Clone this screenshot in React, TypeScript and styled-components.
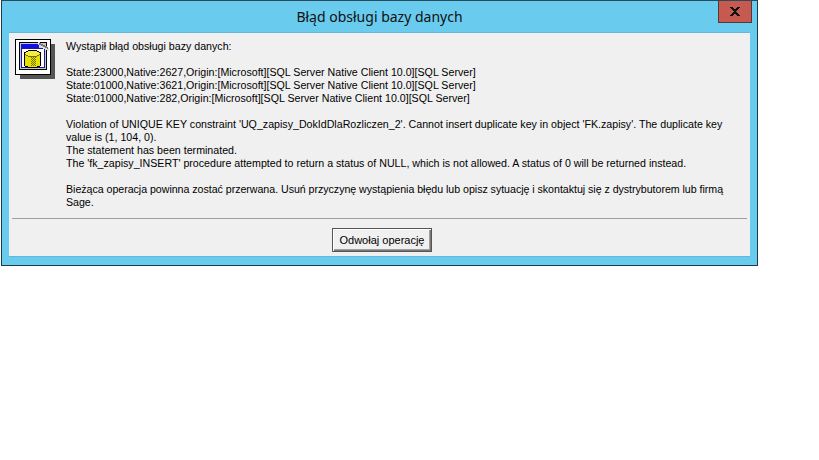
import React from "react";
import styled, { createGlobalStyle } from "styled-components";

const Global = createGlobalStyle`
  html, body { margin: 0; padding: 0; background: #fff; }
`;

const Window = styled.div`
  box-sizing: border-box;
  position: relative;
  width: 757px;
  height: 266px;
  margin-left: 1px;
  background: #69cbee;
  border: 1px solid #1f3a4a;
  border-top-color: #2a4a5c;
  display: flex;
  flex-direction: column;
`;

const TitleBar = styled.div`
  height: 31px;
  flex: none;
  display: flex;
  align-items: center;
  justify-content: center;
  font: 14px "Noto Sans", "Open Sans", sans-serif;
  color: #111;
`;

const CloseButton = styled.div`
  position: absolute;
  top: 0;
  right: 5px;
  box-sizing: border-box;
  width: 34px;
  height: 22px;
  background: #c75a50;
  border: 1px solid #4f3a3c;
  border-top: none;
  display: flex;
  align-items: center;
  justify-content: center;
`;

const Client = styled.div`
  box-sizing: border-box;
  margin: 0 7px;
  height: 225px;
  background: #f0f0f0;
  border: solid #62b8d8;
  border-width: 1px 0;
  display: flex;
  flex-direction: column;
`;

const Content = styled.div`
  display: flex;
  height: 185px;
  flex: none;
  box-sizing: border-box;
`;

const IconSlot = styled.div`
  width: 57px;
  flex: none;
  padding: 6px 0 0 6px;
  box-sizing: border-box;
`;

const Text = styled.div`
  flex: 1;
  padding-top: 7px;
  padding-right: 16px;
  font: 10.65px/13px "Liberation Sans", Arial, sans-serif;
  color: #000;
`;

const Para = styled.p<{ $tracking?: number }>`
  margin: 0 0 13px 0;
  letter-spacing: ${(p) => p.$tracking ?? 0}px;
`;

const Line = styled.div`
  white-space: nowrap;
`;

const Divider = styled.div`
  height: 1px;
  margin: 0 3px;
  background: #a0a0a0;
`;

const Footer = styled.div`
  flex: 1;
  display: flex;
  justify-content: center;
  padding: 9px 0 0 5px;
  box-sizing: border-box;
`;

const Button = styled.button`
  box-sizing: border-box;
  width: 100px;
  height: 24px;
  padding: 0;
  margin: 0;
  background: #f0f0f0;
  color: #000;
  font: 11px "Liberation Sans", Arial, sans-serif;
  border: 1px solid #555;
  box-shadow: inset 1px 1px 0 #fff, inset -1px -1px 0 #777, inset -2px -2px 0 #a0a0a0;
`;

const DbIcon = () => (
  <svg width="41" height="41" viewBox="0 0 41 41" shapeRendering="crispEdges" style={{ display: "block" }}>
    <rect x="5" y="5" width="35" height="35" fill="#555" />
    <rect x="0" y="0" width="36" height="36" fill="#000" />
    <rect x="1" y="1" width="34" height="34" fill="#fff" />
    <rect x="4" y="3" width="28" height="28" fill="#000" />
    <rect x="5" y="4" width="26" height="26" fill="#c8c8c8" />
    <rect x="6" y="5" width="18" height="4" fill="#1010e0" />
    <rect x="6" y="9" width="24" height="20" fill="#1818a8" />
    <rect x="7" y="10" width="22" height="18" fill="#fff" />
    <path d="M23 3h2v1h1v1h2v1h2v1h2v1h1v1h1v3h-2v-1h-2v-1h-2v-1h-2v-1h-2v-2h-1z" fill="#ddd" />
    <path d="M24 4h2v1h2v1h2v1h2v1h1v2h-1v-1h-2v-1h-2v-1h-2v-1h-2z" fill="#777" />
    <path d="M9 14h17v12h-17z" fill="#000" />
    <ellipse cx="17.5" cy="26" rx="8.5" ry="3" fill="#000" />
    <ellipse cx="17.5" cy="14.5" rx="8.5" ry="3.5" fill="#000" />
    <ellipse cx="17.5" cy="26" rx="7.5" ry="2" fill="#e8e000" />
    <rect x="10" y="15" width="15" height="11" fill="#e8e000" />
    <ellipse cx="17.5" cy="14.5" rx="7.5" ry="2.5" fill="#f4ec40" />
    <path d="M10 15h1v1h2v1h9v-1h2v-1h1v1h-1v1h-2v1h-9v-1h-2v-1h-1z" fill="#707000" />
    <path d="M16 18h1v1h-1zM18 18h1v1h-1zM20 18h1v1h-1zM17 19h1v1h-1zM19 19h1v1h-1zM16 20h1v1h-1zM18 20h1v1h-1zM20 20h1v1h-1zM17 21h1v1h-1zM19 21h1v1h-1zM16 22h1v1h-1zM18 22h1v1h-1zM20 22h1v1h-1zM17 23h1v1h-1zM19 23h1v1h-1zM16 24h1v1h-1zM18 24h1v1h-1zM20 24h1v1h-1zM17 25h1v1h-1zM19 25h1v1h-1zM16 26h1v1h-1zM18 26h1v1h-1zM20 26h1v1h-1z" fill="#707000" />
  </svg>
);

export default function App() {
  return (
    <>
      <Global />
      <Window>
        <TitleBar>Błąd obsługi bazy danych</TitleBar>
        <CloseButton>
          <svg width="12" height="9" viewBox="0 0 12 9" shapeRendering="crispEdges">
            <path d="M1 0h3v1h1v1h2v-1h1v-1h3v1h-1v1h-1v1h-1v1h-1v1h1v1h1v1h1v1h1v1h-3v-1h-1v-1h-2v1h-1v1h-3v-1h1v-1h1v-1h1v-1h1v-1h-1v-1h-1v-1h-1v-1h-1z" fill="#111" />
          </svg>
        </CloseButton>
        <Client>
          <Content>
            <IconSlot>
              <DbIcon />
            </IconSlot>
            <Text>
              <Para>Wystąpił błąd obsługi bazy danych:</Para>
              <Para>
                <Line>State:23000,Native:2627,Origin:[Microsoft][SQL Server Native Client 10.0][SQL Server]</Line>
                <Line>State:01000,Native:3621,Origin:[Microsoft][SQL Server Native Client 10.0][SQL Server]</Line>
                <Line>State:01000,Native:282,Origin:[Microsoft][SQL Server Native Client 10.0][SQL Server]</Line>
              </Para>
              <Para>
                <Line>Violation of UNIQUE KEY constraint 'UQ_zapisy_DokIdDlaRozliczen_2'. Cannot insert duplicate key in object 'FK.zapisy'. The duplicate key</Line>
                <Line>value is (1, 104, 0).</Line>
                <Line>The statement has been terminated.</Line>
                <Line>The 'fk_zapisy_INSERT' procedure attempted to return a status of NULL, which is not allowed. A status of 0 will be returned instead.</Line>
              </Para>
              <Para $tracking={-0.035}>
                <Line>Bieżąca operacja powinna zostać przerwana. Usuń przyczynę wystąpienia błędu lub opisz sytuację i skontaktuj się z dystrybutorem lub firmą</Line>
                <Line>Sage.</Line>
              </Para>
            </Text>
          </Content>
          <Divider />
          <Footer>
            <Button>Odwołaj operację</Button>
          </Footer>
        </Client>
      </Window>
    </>
  );
}
